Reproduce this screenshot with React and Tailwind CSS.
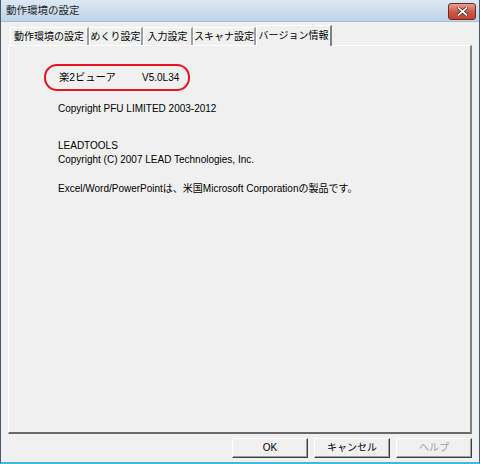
const tabs = [
    { label: "動作環境の設定", w: "w-[79px]" },
    { label: "めくり設定", w: "w-[54px]" },
    { label: "入力設定", w: "w-[50px]" },
    { label: "スキャナ設定", w: "w-[63px]" },
];

const btn =
    "w-[76px] h-[20px] bg-[#f0f0f0] border border-t-white border-l-white border-r-[#404040] border-b-[#404040] shadow-[inset_-1px_-1px_0_#a0a0a0] leading-none";

export default function App() {
    return (
        <div
            className="w-[480px] h-[464px] flex flex-col bg-[#f0f0f0] border-l border-r border-b-2 border-l-[#4a5a6c] border-r-[#4a5a6c] border-b-[#3fb8e8] text-[10px] text-black overflow-hidden"
            style={{ fontFamily: '"Liberation Sans", "Noto Sans CJK JP", sans-serif' }}
        >
            {/* title bar */}
            <div className="h-[22px] shrink-0 flex items-center justify-between pl-[5px] pr-[3px] bg-gradient-to-b from-[#dde8f5] to-[#bfd3eb] border-b border-[#a9bcd4]">
                <span className="text-[10.5px] text-[#1e1e1e]">動作環境の設定</span>
                <div className="w-[28px] h-[17px] mt-[1px] rounded-[3px] border border-[#6b2a20] bg-gradient-to-b from-[#e6a193] via-[#cf5a45] to-[#c0432e] flex items-center justify-center">
                    <svg width="11" height="9" viewBox="0 0 11 9">
                        <path d="M1.5 1 L9.5 8 M9.5 1 L1.5 8" stroke="#3a1a14" strokeWidth="3.2" strokeLinecap="square" />
                        <path d="M1.5 1 L9.5 8 M9.5 1 L1.5 8" stroke="#ffffff" strokeWidth="1.8" strokeLinecap="square" />
                    </svg>
                </div>
            </div>

            {/* tabs */}
            <div className="flex-1 flex flex-col px-[7px] pt-[2px]">
                <div className="flex items-end h-[21px] pl-[2px]">
                    {tabs.map((t) => (
                        <div
                            key={t.label}
                            className={`${t.w} shrink-0 h-[18px] flex items-center justify-center whitespace-nowrap border-t border-l border-t-white border-l-white border-r-2 border-r-[#a0a0a0] leading-none text-[10px]`}
                        >
                            {t.label}
                        </div>
                    ))}
                    <div className="w-[76px] shrink-0 h-[21px] -mb-px relative z-10 bg-[#f0f0f0] flex items-center justify-center whitespace-nowrap border-t border-l border-t-white border-l-white border-r-2 border-r-[#808080] leading-none text-[10px]">
                        バージョン情報
                    </div>
                </div>
                <div className="h-[389px] border-t border-l border-t-white border-l-white border-r-2 border-b-2 border-r-[#808080] border-b-[#696969] pl-[49px] pt-[18px] flex flex-col">
                    <div className="w-[146px] h-[27px] -ml-[14px] flex items-center pl-[13px] border-2 border-[#e8141c] rounded-[13px]">
                        <span className="w-[83px] text-[10.3px]">楽2ビューア</span>
                        <span>V5.0L34</span>
                    </div>
                    <div className="mt-[11px] leading-[14px]">Copyright PFU LIMITED 2003-2012</div>
                    <div className="mt-[23px] leading-[14px]">LEADTOOLS</div>
                    <div className="leading-[14px]">Copyright (C) 2007 LEAD Technologies, Inc.</div>
                    <div className="mt-[15px] leading-[14px]">Excel/Word/PowerPointは、米国Microsoft Corporationの製品です。</div>
                </div>

                {/* buttons */}
                <div className="flex justify-end gap-[6px] mt-[4px]">
                    <button className={btn}>OK</button>
                    <button className={btn}>キャンセル</button>
                    <button className={`${btn} text-[#a0a0a0]`}>ヘルプ</button>
                </div>
            </div>
        </div>
    );
}
